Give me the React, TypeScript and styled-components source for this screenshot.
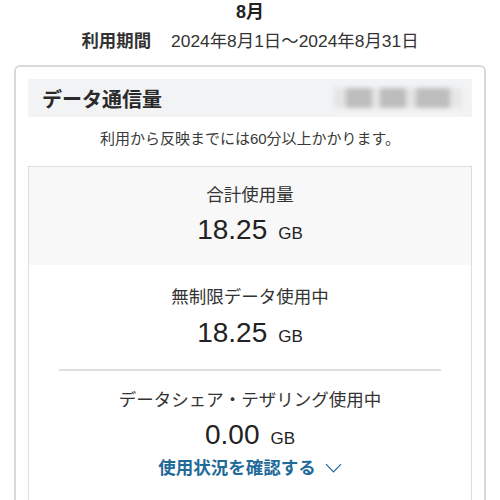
import React from "react";
import styled, { createGlobalStyle } from "styled-components";

const Global = createGlobalStyle`
  html, body { margin: 0; padding: 0; background: #ffffff; }
  body {
    font-family: "Liberation Sans", "Noto Sans CJK JP", sans-serif;
    color: #333333;
  }
`;

const Page = styled.div`
  width: 500px;
  display: flex;
  flex-direction: column;
`;

const MonthTitle = styled.div`
  height: 24px;
  line-height: 24px;
  text-align: center;
  font-size: 18px;
  font-weight: 700;
  color: #222;
`;

const Period = styled.div`
  margin-top: 5px;
  height: 24px;
  line-height: 24px;
  text-align: center;
  font-size: 17.4px;
  color: #333;
  display: flex;
  justify-content: center;
  gap: 20px;
`;

const PeriodLabel = styled.span`
  font-weight: 700;
`;

const Card = styled.div`
  margin: 12px 14px 0;
  border: 2px solid #d7dadd;
  border-bottom: none;
  border-radius: 6px 6px 0 0;
  padding: 12px 12px 0;
  display: flex;
  flex-direction: column;
`;

const HeaderBand = styled.div`
  height: 38px;
  background: #f2f3f5;
  display: flex;
  align-items: center;
  justify-content: space-between;
  padding: 0 10px 0 14px;
`;

const HeaderTitle = styled.div`
  font-size: 20px;
  font-weight: 700;
  color: #2a2a2a;
`;

const Blurred = styled.div`
  width: 128px;
  height: 20px;
  display: flex;
  filter: blur(2.5px);
`;

const BlurBlock = styled.div<{ $w: number; $c: string }>`
  width: ${(p) => p.$w}px;
  height: 100%;
  background: ${(p) => p.$c};
`;

const Note = styled.div`
  padding-top: 12px;
  margin-bottom: 17px;
  line-height: 20px;
  font-size: 15px;
  text-align: center;
  color: #3a3a3a;
`;

const InnerBox = styled.div`
  border: 1px solid #dedede;
  border-bottom: none;
  display: flex;
  flex-direction: column;
`;

const Section = styled.div<{ $bg?: string; $pt: number; $pb: number }>`
  background: ${(p) => p.$bg || "transparent"};
  padding: ${(p) => p.$pt}px 0 ${(p) => p.$pb}px;
  display: flex;
  flex-direction: column;
  align-items: center;
`;

const Label = styled.div`
  height: 24px;
  line-height: 24px;
  font-size: 17.5px;
  color: #333;
`;

const Amount = styled.div<{ $mt: number }>`
  margin-top: ${(p) => p.$mt}px;
  height: 36px;
  display: flex;
  align-items: baseline;
  justify-content: center;
  gap: 11px;
  color: #222;
`;

const Num = styled.span`
  font-size: 28px;
  line-height: 36px;
`;

const Unit = styled.span`
  font-size: 17px;
`;

const Divider = styled.div`
  height: 1.5px;
  background: #dcdfe2;
  margin: 0 30px;
`;

const Link = styled.div`
  margin-top: 3px;
  height: 24px;
  line-height: 24px;
  font-size: 17.5px;
  font-weight: 700;
  color: #1f6a99;
  display: flex;
  align-items: center;
  gap: 9px;
`;

function Usage({ label, value, mt }: { label: string; value: string; mt: number }) {
  return (
    <>
      <Label>{label}</Label>
      <Amount $mt={mt}>
        <Num>{value}</Num>
        <Unit>GB</Unit>
      </Amount>
    </>
  );
}

export default function App() {
  return (
    <Page>
      <Global />
      <MonthTitle>8月</MonthTitle>
      <Period>
        <PeriodLabel>利用期間</PeriodLabel>
        <span>2024年8月1日〜2024年8月31日</span>
      </Period>
      <Card>
        <HeaderBand>
          <HeaderTitle>データ通信量</HeaderTitle>
          <Blurred>
            <BlurBlock $w={12} $c="#e4e4e4" />
            <BlurBlock $w={26} $c="#bdbdbd" />
            <BlurBlock $w={8} $c="#e6e6e6" />
            <BlurBlock $w={26} $c="#bcbcbc" />
            <BlurBlock $w={10} $c="#e4e4e4" />
            <BlurBlock $w={34} $c="#bdbdbd" />
            <BlurBlock $w={12} $c="#e6e6e6" />
          </Blurred>
        </HeaderBand>
        <Note>利用から反映までには60分以上かかります。</Note>
        <InnerBox>
          <Section $bg="#f8f8f8" $pt={16} $pb={17}>
            <Usage label="合計使用量" value="18.25" mt={5} />
          </Section>
          <Section $pt={20} $pb={18}>
            <Usage label="無制限データ使用中" value="18.25" mt={6} />
          </Section>
          <Divider />
          <Section $pt={17} $pb={20}>
            <Usage label="データシェア・テザリング使用中" value="0.00" mt={5} />
            <Link>
              <span>使用状況を確認する</span>
              <svg width="17" height="10" viewBox="0 0 17 10" fill="none">
                <path d="M1 1.2 L8.5 8.8 L16 1.2" stroke="#1f6a99" strokeWidth="1.2" />
              </svg>
            </Link>
          </Section>
        </InnerBox>
      </Card>
    </Page>
  );
}
